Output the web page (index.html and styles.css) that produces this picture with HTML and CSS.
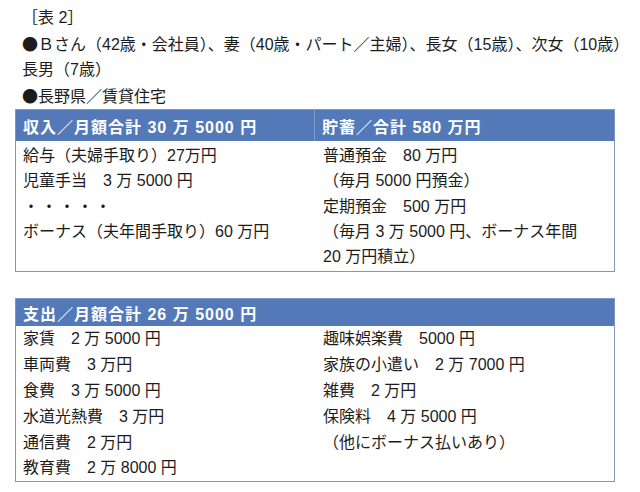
FILE: index.html
```html
<!DOCTYPE html>
<html lang="ja">
<head>
<meta charset="utf-8">
<title>表2</title>
<link rel="stylesheet" href="styles.css">
</head>
<body>
<div class="page">
  <div class="intro">
    <div class="line caption">［表 2］</div>
    <div class="line nowrap"><span class="mark">●</span>Ｂさん（42歳・会社員）、妻（40歳・パート／主婦）、長女（15歳）、次女（10歳）</div>
    <div class="line">長男（7歳）</div>
    <div class="line"><span class="mark">●</span>長野県／賃貸住宅</div>
  </div>

  <div class="table t1">
    <div class="head h1 left">収入／月額合計 30 万 5000 円</div>
    <div class="head h1 right">貯蓄／合計 580 万円</div>
    <div class="cell c1">
      <div>給与（夫婦手取り）27万円</div>
      <div>児童手当　3 万 5000 円</div>
      <div class="dots">・・・・・</div>
      <div>ボーナス（夫年間手取り）60 万円</div>
    </div>
    <div class="cell c1">
      <div>普通預金　80 万円</div>
      <div>（毎月 5000 円預金）</div>
      <div>定期預金　500 万円</div>
      <div>（毎月 3 万 5000 円、ボーナス年間<br>20 万円積立）</div>
    </div>
  </div>

  <div class="table t2">
    <div class="head h2 full">支出／月額合計 26 万 5000 円</div>
    <div class="cell c2">
      <div>家賃　2 万 5000 円</div>
      <div>車両費　3 万円</div>
      <div>食費　3 万 5000 円</div>
      <div>水道光熱費　3 万円</div>
      <div>通信費　2 万円</div>
      <div>教育費　2 万 8000 円</div>
    </div>
    <div class="cell c2">
      <div>趣味娯楽費　5000 円</div>
      <div>家族の小遣い　2 万 7000 円</div>
      <div>雑費　2 万円</div>
      <div>保険料　4 万 5000 円</div>
      <div>（他にボーナス払いあり）</div>
    </div>
  </div>
</div>
</body>
</html>
```

FILE: styles.css
```css
html, body {
  margin: 0;
  padding: 0;
  background: #ffffff;
}

body {
  font-family: "Liberation Sans", "Noto Sans CJK JP", sans-serif;
  font-size: 16px;
  color: #1c1c1c;
}

.page {
  padding: 5px 25px 0 15px;
}

.intro {
  padding-left: 7px;
}

.line {
  line-height: 25.5px;
}

.mark {
  font-family: "Noto Sans CJK JP", sans-serif;
}

.nowrap {
  white-space: nowrap;
}

.table {
  display: grid;
  grid-template-columns: 299px 299px;
  border: 1px solid #8297bd;
  width: 598px;
}

.t2 {
  margin-top: 26px;
}

.head {
  background: #5479b8;
  color: #ffffff;
  font-weight: bold;
  display: flex;
  align-items: center;
  padding-left: 7px;
  letter-spacing: 1px;
}

.h1 {
  height: 31px;
}

.h1.left {
  border-right: 1px solid #7f9bcc;
}

.h1.right {
  padding-left: 7px;
}

.h2 {
  height: 27px;
}

.full {
  grid-column: 1 / 3;
}

.cell {
  padding-left: 7px;
}

.cell + .cell {
  padding-left: 8px;
}

.c1 {
  line-height: 25.3px;
  padding-top: 2px;
  padding-bottom: 2px;
}

.c2 {
  line-height: 25.8px;
}

.dots {
  letter-spacing: 2px;
}
```
